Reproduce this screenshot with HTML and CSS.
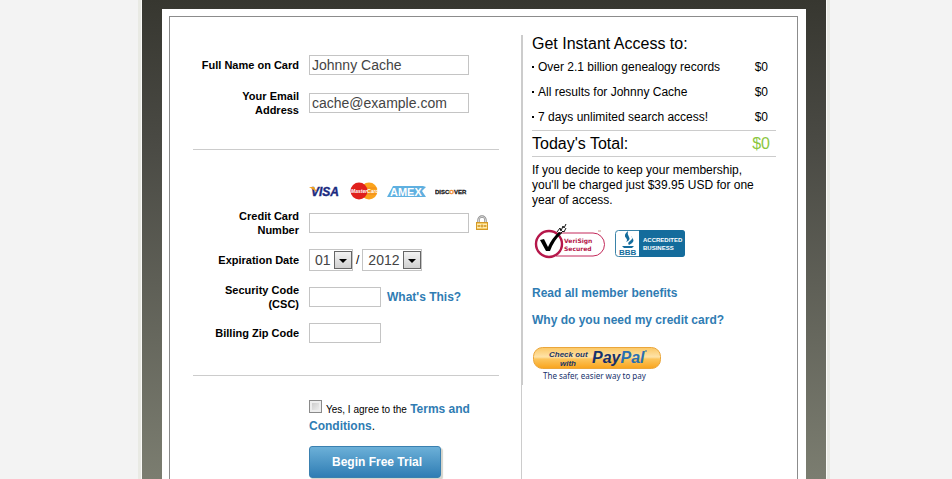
FILE: index.html
```
<!DOCTYPE html>
<html lang="en">
<head>
    <meta charset="UTF-8">
    <title>Begin Free Trial</title>
    <link rel="stylesheet" href="styles.css">
</head>
<body>
<div id="wrap">
    <div class="sheet">
        <div class="panel">
            <form class="signup" action="#" method="post">
                <div class="group">
                    <div class="row">
                        <label for="name">Full Name on Card</label>
                        <input class="text" type="text" id="name" value="Johnny Cache">
                    </div>
                    <div class="row">
                        <label for="email">Your Email Address</label>
                        <input class="text" type="text" id="email" value="cache@example.com">
                    </div>
                </div>
                <div class="group payment">
                    <div class="cards">
                        <svg width="32" height="18" viewBox="0 0 32 18" role="img" aria-label="Visa">
                            <text x="2" y="14" class="visa">VISA</text>
                            <path d="M0 5h5l3 5z" fill="#f0a020"/>
                        </svg>
                        <svg width="30" height="18" viewBox="0 0 30 18" role="img" aria-label="MasterCard">
                            <circle cx="20" cy="9" r="8.500" fill="#fba31c"/>
                            <circle cx="10" cy="9" r="8.500" fill="#e0201c"/>
                            <path d="M18 6h9M17 9h11M18 12h9" stroke="#f08a1c"/>
                            <text x="2" y="11" class="master">MasterCard</text>
                        </svg>
                        <svg width="40" height="18" viewBox="0 0 40 18" role="img" aria-label="American Express">
                            <path d="M0 15L6 4h30l3 1-4 4 4 6z" fill="#5fb0e0"/>
                            <text x="3" y="14" class="amex">AMEX</text>
                        </svg>
                        <svg width="33" height="18" viewBox="0 0 33 18" role="img" aria-label="Discover">
                            <text x="0" y="12" class="discover">DISC<tspan class="orange">O</tspan>VER</text>
                        </svg>
                    </div>
                    <div class="row">
                        <label for="card">Credit Card Number</label>
                        <input class="text" type="text" id="card">
                        <svg class="lock" width="14" height="16" viewBox="0 0 14 16">
                            <path d="M3.500 8V5a3.500 3.500 0 0 1 7 0v3" fill="none" stroke="#8b8b8b" stroke-width="2.400"/>
                            <path d="M3.500 8V5a3.500 3.500 0 0 1 7 0v3" fill="none" stroke="#d8d8d8"/>
                            <rect x="1.500" y="7.500" width="11" height="7" fill="#f8cf68" stroke="#d39a2a"/>
                            <path d="M2 9.500h10M2 12.500h10" stroke="#fdebb5"/>
                            <path d="M7 9.500v3M4 10v2M10 10v2" stroke="#b87d1a"/>
                        </svg>
                    </div>
                    <div class="row">
                        <label for="month">Expiration Date</label>
                        <div class="dates">
                            <span class="drop">
                                <select id="month"><option>01</option></select>
                                <svg width="18" height="18" viewBox="0 0 18 18"><use href="#arrow"/></svg>
                            </span>
                            <span>/</span>
                            <span class="drop year">
                                <select id="year" aria-label="Expiration year"><option>2012</option></select>
                                <svg width="18" height="18" viewBox="0 0 18 18">
                                    <defs>
                                        <linearGradient id="face" x2="0" y2="1">
                                            <stop offset="0" stop-color="#f4f4f4"/>
                                            <stop offset="1" stop-color="#cfcfcf"/>
                                        </linearGradient>
                                        <g id="arrow">
                                            <rect x=".5" y=".5" width="17" height="17" fill="url(#face)" stroke="#666"/>
                                            <path d="M5 8h8l-4 4z" fill="#000"/>
                                        </g>
                                    </defs>
                                    <use href="#arrow"/>
                                </svg>
                            </span>
                        </div>
                    </div>
                    <div class="row">
                        <label for="csc">Security Code (CSC)</label>
                        <input class="text short" type="text" id="csc">
                        <a class="hint" href="#">What's This?</a>
                    </div>
                    <div class="row">
                        <label for="zip">Billing Zip Code</label>
                        <input class="text short" type="text" id="zip">
                    </div>
                </div>
                <div class="submit">
                    <p class="terms">
                        <input type="checkbox" id="agree"><label for="agree">Yes, I agree to the</label>
                        <a href="#">Terms and Conditions</a>.
                    </p>
                    <button type="submit">Begin Free Trial</button>
                </div>
            </form>
            <div class="side">
                <h2>Get Instant Access to:</h2>
                <ul>
                    <li><span>Over 2.1 billion genealogy records</span><b>$0</b></li>
                    <li><span>All results for Johnny Cache</span><b>$0</b></li>
                    <li><span>7 days unlimited search access!</span><b>$0</b></li>
                </ul>
                <div class="total"><span>Today's Total:</span><b>$0</b></div>
                <p class="note">If you decide to keep your membership, you'll be charged just $39.95 USD for one year of access.</p>
                <div class="seals">
                    <svg width="74" height="40" viewBox="0 0 74 40" role="img" aria-label="VeriSign Secured">
                        <path d="M26 11h35a11.500 11.500 0 0 1 0 23H24" fill="none" stroke="#c3295a"/>
                        <circle cx="17" cy="22" r="13" fill="#fff" stroke="#b5174a" stroke-width="2.400"/>
                        <path d="M8 18l4-1 4 8q4-9 11-15l3 1q-8 7-12 18h-4z" fill="#000"/>
                        <path d="M25 10l3-4 1 3 2-5 1 2 2-4M27 13l4-4 1 1 2-4" fill="none" stroke="#111"/>
                        <text x="32" y="21" class="seal">VeriSign</text>
                        <text x="32" y="29" class="seal">Secured</text>
                        <path d="M66 9h3" stroke="#c98"/>
                    </svg>
                    <svg width="72" height="40" viewBox="0 0 72 40" role="img" aria-label="BBB Accredited Business">
                        <rect x="1.500" y="8.500" width="69" height="26" rx="3" fill="#fff" stroke="#3a83a8"/>
                        <path d="M25 8h43a3 3 0 0 1 3 3v21a3 3 0 0 1-3 3H25z" fill="#146c9c"/>
                        <path d="M14 9q-5 4-2 7 2 2 0 4 5-2 3-5t-1-6zM17 14q3 2-1 5-3 2-1 4 6-3 4-6zM8 24h12l-2 2h-8z" fill="#146c9c"/>
                        <text x="5" y="33" class="bbb">BBB</text>
                        <text x="29" y="20" class="accredited">ACCREDITED</text>
                        <text x="29" y="28" class="accredited">BUSINESS</text>
                    </svg>
                </div>
                <p class="more"><a href="#">Read all member benefits</a></p>
                <p class="more"><a href="#">Why do you need my credit card?</a></p>
                <a class="paypal" href="#">
                    <svg width="130" height="36" viewBox="0 0 130 36" role="img" aria-label="Check out with PayPal">
                        <defs>
                            <linearGradient id="gold" x2="0" y2="1">
                                <stop offset="0" stop-color="#fbc764"/>
                                <stop offset=".45" stop-color="#fee3a8"/>
                                <stop offset=".55" stop-color="#fcc55c"/>
                                <stop offset="1" stop-color="#f9a41c"/>
                            </linearGradient>
                        </defs>
                        <rect x="1.500" y="1.500" width="127" height="21" rx="9" fill="url(#gold)" stroke="#eba63a"/>
                        <text x="17" y="11" class="check">Check out</text>
                        <text x="28" y="20" class="check">with</text>
                        <text x="60" y="17" class="pp">Pay<tspan fill="#2a6fb0">Pal</tspan></text>
                        <path d="M113 5h2" stroke="#2a6fb0"/>
                        <text x="11" y="33" class="safer">The safer, easier way to pay</text>
                    </svg>
                </a>
            </div>
        </div>
    </div>
</div>
</body>
</html>
```
FILE: styles.css
```
*{
    margin: 0;
    padding: 0;
    box-sizing: border-box;
}
body{
    padding-left: 16px;
    background: #f3f3f3;
    color: #000;
    font: 12px/15px "Liberation Sans", Arial, sans-serif;
}
a{
    color: #2f7cb3;
    font-weight: bold;
    text-decoration: none;
}
li{
    list-style: none;
}
b{
    font-weight: normal;
}
#wrap{
    max-width: 684px;
    min-height: 100vh;
    margin: 0 auto;
    padding: 9px 20px 0;
    display: flex;
    background: linear-gradient(#373730, #4a4a44 30%, #7b7d70);
    box-shadow: 0 0 0 1px #fafaf7, 0 0 0 4px #e9eae4;
}
.sheet{
    flex: 1;
    display: flex;
    padding: 7px 8px 0 7px;
    background: #fff;
}
.panel{
    flex: 1;
    display: flex;
    padding: 18px 21px 0 23px;
    border: 1px solid #8c8c8c;
    border-bottom: 0;
}
/* form */
.signup{
    flex: 1;
    padding: 20px 22px 0 0;
    border-right: 1px solid #ccc;
}
.group{
    display: flex;
    flex-direction: column;
    gap: 14px;
    padding-bottom: 32px;
    border-bottom: 1px solid #ccc;
}
.row{
    display: flex;
    align-items: center;
}
.row label{
    width: 106px;
    margin-right: 10px;
    padding-left: 20px;
    font-size: 11px;
    font-weight: bold;
    line-height: 14px;
    text-align: right;
}
.row:first-child label{
    padding-left: 0;
}
.text{
    width: 160px;
    height: 20px;
    padding: 0 2px;
    border: 1px solid #c4c4c4;
    background: #fff;
    color: #444;
    font: 14px "Liberation Sans", Arial, sans-serif;
}
.short{
    width: 72px;
}
.hint{
    margin-left: 6px;
}
.lock{
    margin-left: 6px;
}
.payment{
    gap: 12px;
    padding-top: 32px;
}
.cards{
    display: flex;
    gap: 8px;
    height: 15px;
    margin-left: 116px;
}
.dates{
    display: flex;
    align-items: center;
    gap: 3px;
}
.drop{
    display: grid;
    align-items: center;
    width: 44px;
}
.drop.year{
    width: 60px;
}
.drop select,
.drop svg{
    grid-area: 1 / 1;
}
.drop svg{
    justify-self: end;
    margin-right: 1px;
    pointer-events: none;
}
.drop select{
    appearance: none;
    width: 100%;
    height: 22px;
    padding: 0 5px;
    border: 1px solid #c4c4c4;
    border-radius: 0;
    background: #fff;
    color: #444;
    font: 14px "Liberation Sans", Arial, sans-serif;
}
.submit{
    padding: 24px 0 0 116px;
}
.terms{
    font-size: 12px;
    line-height: 16px;
}
.terms label{
    font-size: 10px;
}
.terms input{
    appearance: none;
    width: 13px;
    height: 13px;
    margin-right: 4px;
    border: 1px solid #8a8a8a;
    background: linear-gradient(135deg, #c4c4c4, #f6f6f6);
    box-shadow: inset 0 0 0 2px #eee;
}
button{
    width: 132px;
    height: 32px;
    margin-top: 12px;
    padding-left: 4px;
    border: 1px solid #3a80b0;
    border-radius: 3px;
    background: linear-gradient(#6cb0d8, #2f7db4);
    box-shadow: 2px 2px 1px #d5d5cc;
    color: #fff;
    font: bold 12px "Liberation Sans", Arial, sans-serif;
}
/* right column */
.side{
    align-self: flex-start;
    width: 254px;
    padding: 0 0 3px 9px;
    border-left: 1px solid #ccc;
}
.side h2{
    padding-bottom: 2px;
    font-size: 16px;
    font-weight: normal;
    line-height: 18px;
}
.side li{
    display: flex;
    justify-content: space-between;
    padding: 0 8px 0 6px;
    line-height: 25px;
    background: linear-gradient(#000, #000) 0 11px / 2px 2px no-repeat;
}
.total{
    display: flex;
    justify-content: space-between;
    padding-right: 6px;
    border: 1px solid #ccc;
    border-width: 1px 0;
    font-size: 16px;
    line-height: 25px;
}
.total b{
    color: #8cc63f;
}
.note{
    padding: 6px 8px 0 0;
}
.seals{
    display: flex;
    gap: 8px;
    margin: 14px 0 24px;
}
.more{
    margin-bottom: 12px;
}
.paypal{
    display: block;
    padding-top: 6px;
}
.paypal svg{
    display: block;
}
/* lettering inside the logos */
svg text{
    font-family: "Liberation Sans", Arial, sans-serif;
    font-weight: bold;
}
.visa{
    font-size: 12px;
    font-style: italic;
    fill: #1a2a80;
    stroke: #1a2a80;
    stroke-width: .4px;
}
svg .master{
    font-size: 5px;
    font-style: italic;
    fill: #fff;
}
.amex{
    font-size: 11px;
    fill: #fff;
}
.discover{
    font-size: 6px;
    fill: #222;
    stroke: #222;
    stroke-width: .3px;
}
.orange{
    fill: #f08a24;
    stroke: #f08a24;
}
svg .seal{
    font-family: "DejaVu Sans", sans-serif;
    font-size: 6px;
    fill: #b5174a;
}
.bbb{
    font-size: 8px;
    fill: #146c9c;
}
.accredited{
    font-size: 6px;
    fill: #fff;
}
.check{
    font-size: 8px;
    font-style: italic;
    fill: #1b3564;
}
.pp{
    font-size: 16px;
    font-style: italic;
    fill: #16316b;
}
svg .safer{
    font-family: "Noto Sans", sans-serif;
    font-size: 8px;
    font-weight: normal;
    fill: #16316b;
}
```
